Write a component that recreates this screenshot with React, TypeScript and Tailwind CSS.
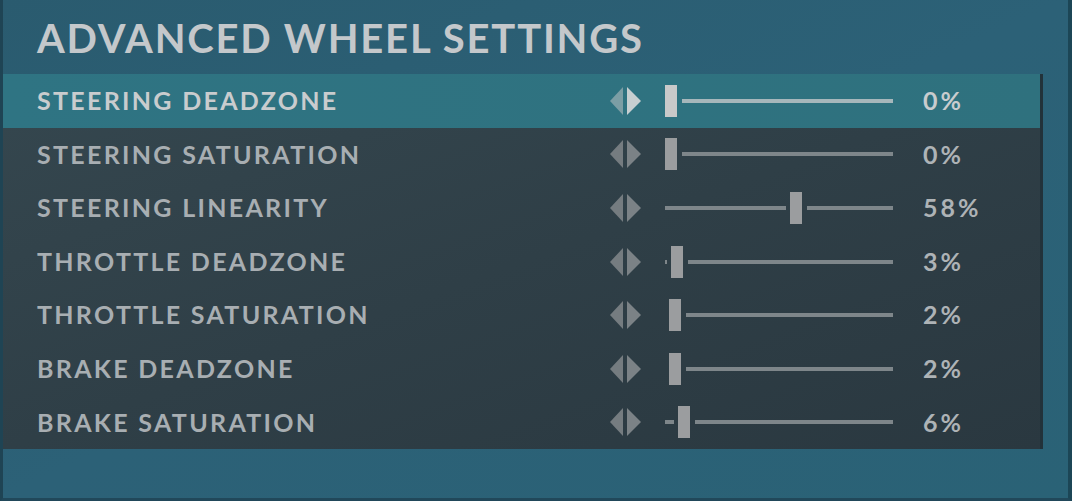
import React from 'react';

interface Setting {
  label: string;
  value: number;
}

const settings: Setting[] = [
  { label: 'STEERING DEADZONE', value: 0 },
  { label: 'STEERING SATURATION', value: 0 },
  { label: 'STEERING LINEARITY', value: 58 },
  { label: 'THROTTLE DEADZONE', value: 3 },
  { label: 'THROTTLE SATURATION', value: 2 },
  { label: 'BRAKE DEADZONE', value: 2 },
  { label: 'BRAKE SATURATION', value: 6 },
];

const TRACK = 228;
const KNOB = 12;
const GAP = 4;

const Arrows: React.FC<{ active: boolean }> = ({ active }) => (
  <svg width="32" height="28" viewBox="0 0 32 28" className="shrink-0">
    <polygon points="13,0 13,28 0,14" fill={active ? '#7c9ea5' : '#757c80'} />
    <polygon points="17,0 17,28 31,14" fill={active ? '#c7cfd1' : '#7b8286'} />
  </svg>
);

const Slider: React.FC<{ value: number; active: boolean }> = ({ value, active }) => {
  const left = Math.round((value / 100) * (TRACK - KNOB));
  const trackColor = active ? 'bg-[#a6b7bb]' : 'bg-[#7e868a]';
  const knobColor = active ? 'bg-[#c9c9c9]' : 'bg-[#9b9d9f]';
  return (
    <div className="relative h-8 shrink-0" style={{ width: TRACK }}>
      {left - GAP > 0 && (
        <div
          className={`absolute top-[14px] h-1 left-0 ${trackColor}`}
          style={{ width: left - GAP }}
        />
      )}
      <div
        className={`absolute top-[14px] h-1 right-0 ${trackColor}`}
        style={{ left: left + KNOB + GAP + 1 }}
      />
      <div className={`absolute top-0 h-8 w-3 ${knobColor}`} style={{ left }} />
    </div>
  );
};

export default function App() {
  return (
    <div
      className="w-[1072px] h-[501px] overflow-hidden bg-gradient-to-br from-[#2a5b6f] via-[#2c6177] to-[#2a6276] border-l-[3px] border-r-[4px] border-b-[3px] border-l-[#1f4454] border-r-[#1c4656] border-b-[#21485a] text-[#c3c8cb]"
      style={{ fontFamily: 'Lato, "Open Sans", sans-serif' }}
    >
      {/* Title */}
      <div className="h-[74px] pl-[34px] pt-[12px]">
        <h1 className="text-[40px] font-bold leading-[52px] tracking-[1.8px] text-[#c4c8cb]">
          ADVANCED WHEEL SETTINGS
        </h1>
      </div>

      {/* Settings list */}
      <div className="w-[1040px] bg-gradient-to-br from-[#35474f] via-[#2f3f47] to-[#2a3840] border-r-[3px] border-r-[#22323a]">
        {settings.map((s, i) => {
          const active = i === 0;
          return (
            <div
              key={s.label}
              className={`flex items-center h-[53.6px] ${
                active ? 'bg-gradient-to-r from-[#2f7483] to-[#2f717e]' : ''
              }`}
            >
              <div
                className={`w-[607px] shrink-0 pl-[34px] text-[25px] font-bold tracking-[2.3px] ${
                  active ? 'text-[#c9ccce]' : 'text-[#a8aeb2]'
                }`}
              >
                {s.label}
              </div>
              <Arrows active={active} />
              <div className="w-[23px] shrink-0" />
              <Slider value={s.value} active={active} />
              <div
                className={`pl-[30px] text-[25px] font-bold tracking-[3px] ${
                  active ? 'text-[#c9ccce]' : 'text-[#aeb3b6]'
                }`}
              >
                {s.value}%
              </div>
            </div>
          );
        })}
      </div>
    </div>
  );
}
